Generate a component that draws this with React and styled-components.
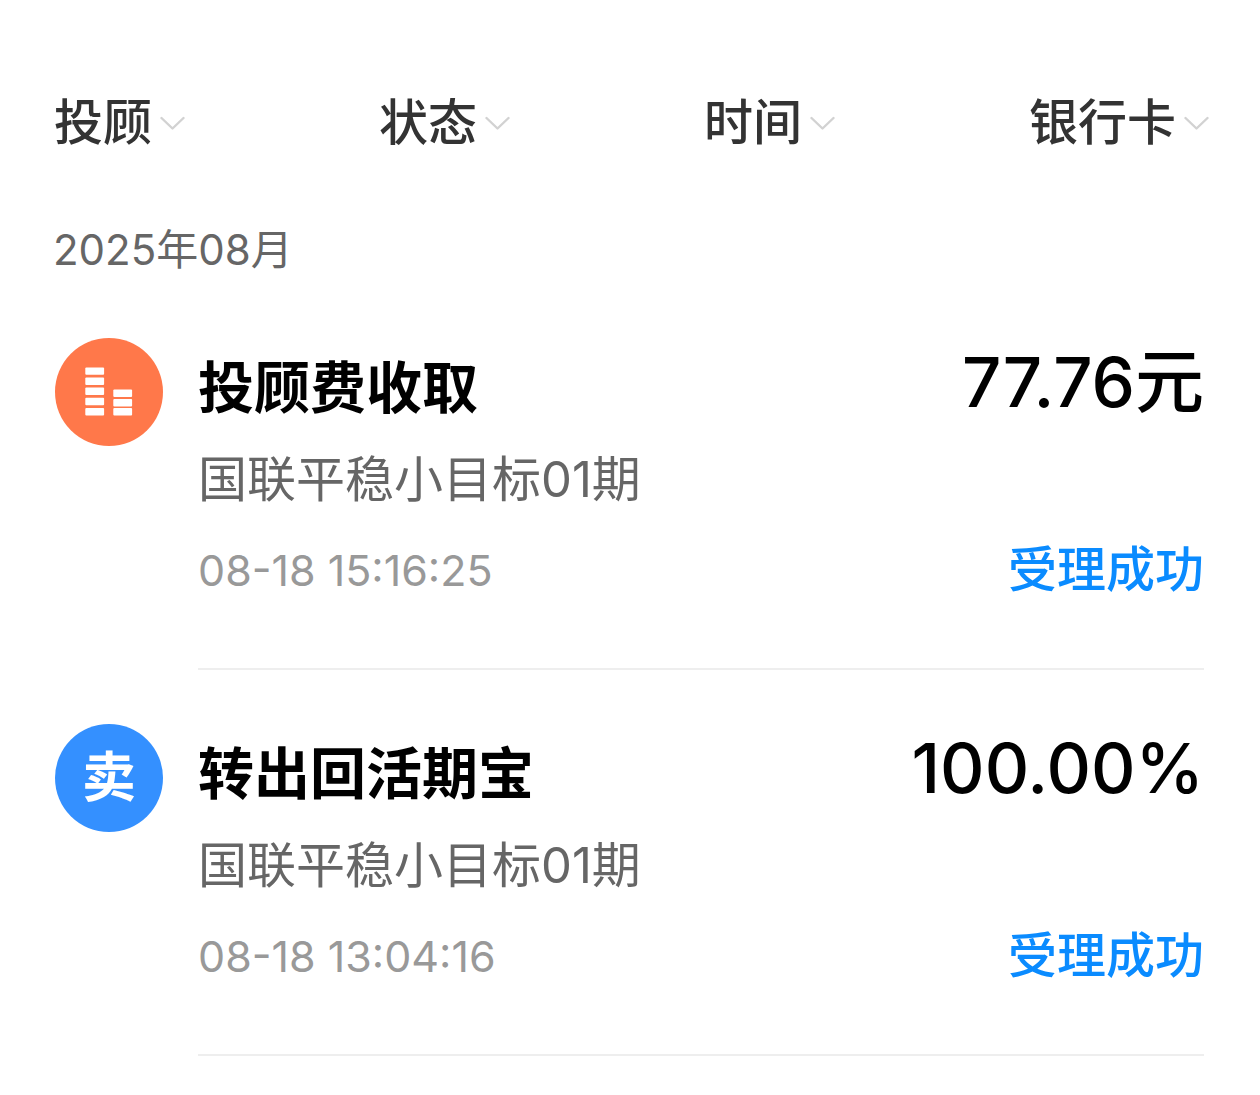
import React from 'react';
import styled, { createGlobalStyle } from 'styled-components';

const GlobalStyle = createGlobalStyle`
  * { box-sizing: border-box; }
  body {
    margin: 0;
    background: #fff;
    color: #000;
    font-family: Inter, "Noto Sans CJK SC", sans-serif;
    font-weight: 400;
  }
`;

const Page = styled.main`
  padding-top: 91px;
`;

const FilterBar = styled.div`
  display: flex;
  justify-content: space-between;
  padding: 0 51px 0 54px;
`;

const Filter = styled.label`
  display: flex;
  align-items: center;
  gap: 7px;
`;

const FilterSelect = styled.select`
  appearance: none;
  margin: 0;
  padding: 0;
  border: 0;
  background: none;
  color: #333;
  font-family: inherit;
  font-size: 49px;
  font-weight: 500;
  line-height: 64px;
  height: 64px;
  cursor: pointer;
`;

const Month = styled.h2`
  margin: 0;
  padding: 63px 56px 54px 53px;
  color: #666;
  font-size: 42px;
  font-weight: inherit;
  line-height: 64px;
`;

const List = styled.ul`
  margin: 0;
  padding: 0 56px 0 55px;
  list-style: none;
`;

const Item = styled.li`
  display: flex;
  align-items: flex-start;
  gap: 35px;
  padding-bottom: 52px;
`;

const Badge = styled.span`
  flex: none;
  display: flex;
  align-items: center;
  justify-content: center;
  width: 108px;
  height: 108px;
  margin-top: 2px;
  border-radius: 50%;
  background: ${(p) => p.$color};
  color: #fff;
  font-size: 54px;
  font-weight: 700;
  line-height: 108px;
`;

const Body = styled.div`
  flex: 1;
  min-width: 0;
  padding-bottom: 68px;
  border-bottom: 2px solid #eee;
`;

const Line = styled.div`
  display: flex;
  justify-content: space-between;
  align-items: flex-start;
`;

const Title = styled.h3`
  margin: 0;
  font-size: 56px;
  font-weight: 700;
  line-height: 104px;
`;

const Amount = styled.span`
  font-size: 69px;
  font-weight: 500;
  line-height: 92px;
`;

const Product = styled.p`
  margin: 0 0 20px;
  color: #666;
  font-size: 49px;
  line-height: 80px;
`;

const Time = styled.time`
  color: #999;
  font-size: 43px;
  line-height: 60px;
`;

const Status = styled.span`
  color: #0a8bff;
  font-size: 49px;
  font-weight: 500;
  line-height: 60px;
`;

function Chevron() {
  return (
    <svg width="25" height="18" viewBox="0 0 25 18" fill="none" aria-hidden="true">
      <path d="M1.5 4L12.5 14.5L23.5 4" stroke="#d2d2d2" strokeWidth="2.4" strokeLinecap="round" strokeLinejoin="round" />
    </svg>
  );
}

function CoinStacks() {
  return (
    <svg width="108" height="108" viewBox="0 0 108 108" fill="#fff" aria-hidden="true">
      {[29.4, 39.5, 49.6, 59.8, 70].map((y) => (
        <rect key={y} x="30.3" y={y} width="18.8" height="7.4" rx="1" />
      ))}
      {[51.6, 61, 70].map((y) => (
        <rect key={y} x="58.3" y={y} width="18.8" height="7.4" rx="1" />
      ))}
    </svg>
  );
}

const filters = ['投顾', '状态', '时间', '银行卡'];

const records = [
  {
    color: '#ff784a',
    icon: <CoinStacks />,
    title: '投顾费收取',
    amount: '77.76元',
    product: '国联平稳小目标01期',
    time: '08-18 15:16:25',
    status: '受理成功',
  },
  {
    color: '#3490ff',
    icon: '卖',
    title: '转出回活期宝',
    amount: '100.00%',
    product: '国联平稳小目标01期',
    time: '08-18 13:04:16',
    status: '受理成功',
  },
];

export default function App() {
  return (
    <Page>
      <GlobalStyle />
      <FilterBar>
        {filters.map((name) => (
          <Filter key={name}>
            <FilterSelect aria-label={name}>
              <option>{name}</option>
            </FilterSelect>
            <Chevron />
          </Filter>
        ))}
      </FilterBar>
      <Month>2025年08月</Month>
      <List>
        {records.map((r) => (
          <Item key={r.time}>
            <Badge $color={r.color}>{r.icon}</Badge>
            <Body>
              <Line>
                <Title>{r.title}</Title>
                <Amount>{r.amount}</Amount>
              </Line>
              <Product>{r.product}</Product>
              <Line>
                <Time>{r.time}</Time>
                <Status>{r.status}</Status>
              </Line>
            </Body>
          </Item>
        ))}
      </List>
    </Page>
  );
}
